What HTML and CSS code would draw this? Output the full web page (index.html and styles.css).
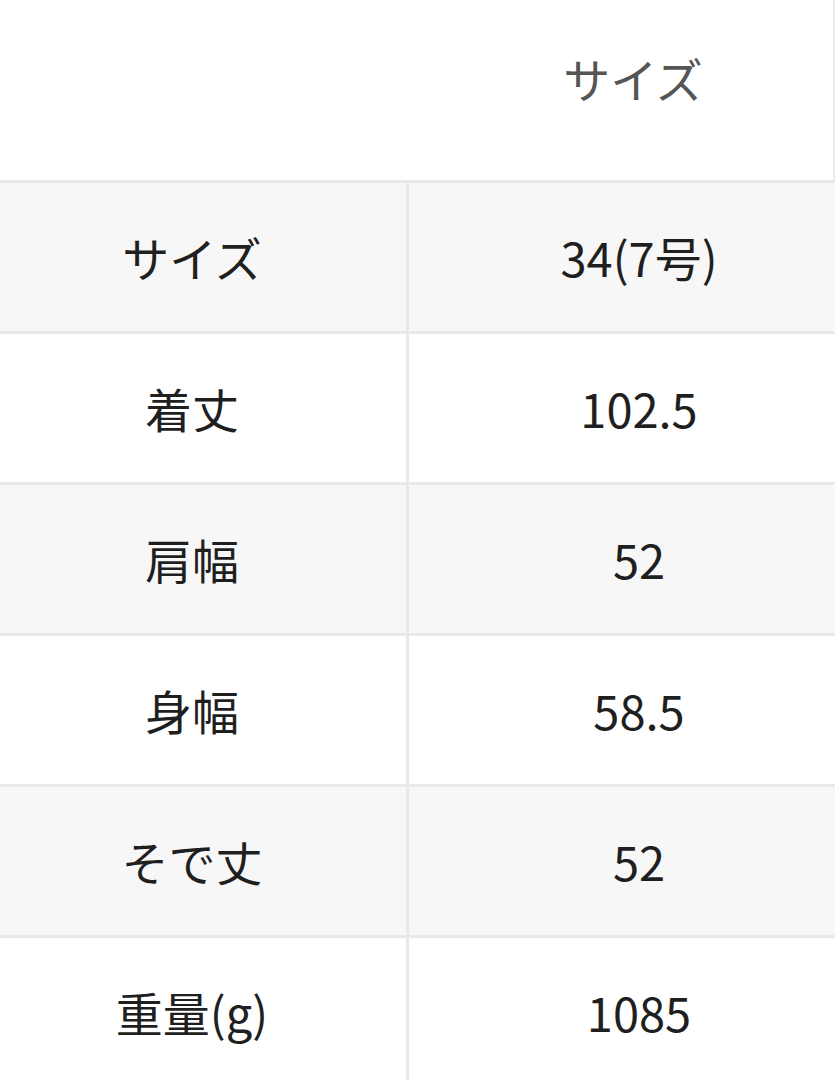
FILE: index.html
```html
<!DOCTYPE html>
<html lang="ja">
<head>
<meta charset="utf-8">
<title>サイズ</title>
<link rel="stylesheet" href="styles.css">
</head>
<body>
<div class="sheet">
  <div class="head">
    <div class="head-cell"></div>
    <div class="head-cell head-title">サイズ</div>
  </div>
  <div class="table">
    <div class="row alt"><div class="cell label">サイズ</div><div class="cell">34(7号)</div></div>
    <div class="row"><div class="cell label">着丈</div><div class="cell">102.5</div></div>
    <div class="row alt"><div class="cell label">肩幅</div><div class="cell">52</div></div>
    <div class="row"><div class="cell label">身幅</div><div class="cell">58.5</div></div>
    <div class="row alt"><div class="cell label">そで丈</div><div class="cell">52</div></div>
    <div class="row"><div class="cell label">重量(g)</div><div class="cell">1085</div></div>
  </div>
</div>
</body>
</html>
```

FILE: styles.css
```css
html, body {
  margin: 0;
  padding: 0;
  background: #ffffff;
}
body {
  font-family: "Noto Sans CJK JP", "Noto Sans", sans-serif;
  color: #1f1f1f;
  overflow: hidden;
}
.sheet {
  width: 835px;
}
.head {
  display: grid;
  grid-template-columns: 409px 1fr;
  height: 180px;
  box-sizing: border-box;
  border-right: 2px solid #ececec;
}
.head-cell {
  display: flex;
  align-items: center;
  justify-content: center;
  padding-bottom: 26px;
}
.head-title {
  color: #555555;
  font-size: 47px;
  padding-left: 24px;
}
.table {
  display: flex;
  flex-direction: column;
}
.row {
  display: grid;
  grid-template-columns: 409px 1fr;
  height: 151px;
  box-sizing: border-box;
  border-top: 3px solid #e9e9e9;
  background: #ffffff;
}
.row.alt {
  background: #f7f7f7;
}
.cell {
  display: flex;
  align-items: center;
  justify-content: center;
  font-size: 47px;
  padding-bottom: 2px;
  padding-left: 34px;
}
.cell.label {
  border-right: 3px solid #e9e9e9;
  padding-left: 0;
  padding-right: 22px;
}
```
